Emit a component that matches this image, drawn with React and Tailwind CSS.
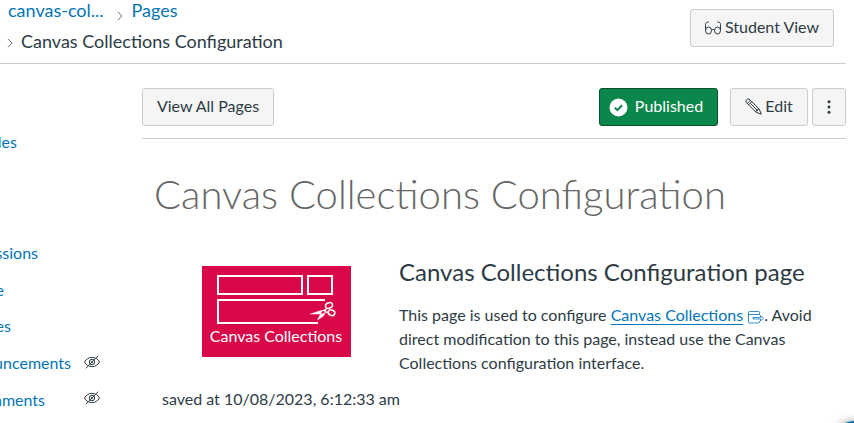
function Chevron({ className }) {
  return (
    <svg className={className} width="6" height="10" viewBox="0 0 6 10" fill="none" stroke="#6b7780" strokeWidth="1">
      <path d="M.8.8 5 5 .8 9.2" />
    </svg>
  );
}

function HiddenEye({ className }) {
  return (
    <svg className={className} width="16" height="14" viewBox="0 0 16 14" fill="none" stroke="#2d3b45" strokeWidth="1">
      <path d="M.5 7C2.2 3.9 4.8 2.4 8 2.4S13.800 3.900 15.500 7C13.800 10.100 11.200 11.600 8 11.600S2.200 10.100.5 7Z" />
      <circle cx="8" cy="7" r="2.700" />
      <circle cx="8" cy="7" r=".8" />
      <path d="M1.800 13.300 14.200.7" />
    </svg>
  );
}

function Glasses() {
  return (
    <svg className="mt-px" width="16" height="14" viewBox="0 0 16 14" fill="none" stroke="#2d3b45" strokeWidth="1">
      <ellipse cx="3.500" cy="9.500" rx="3" ry="3.500" />
      <ellipse cx="12.500" cy="9.500" rx="3" ry="3.500" />
      <path d="M.5 9.500V3.500C.5 1.600 1.500 1 3.800 1M15.500 9.500V3.500C15.500 1.600 14.500 1 12.200 1M6.500 9.500C7 8 9 8 9.500 9.500" />
    </svg>
  );
}

function Pencil() {
  return (
    <svg width="17" height="17" viewBox="0 0 17 17" fill="none" stroke="#2d3b45" strokeWidth="1" strokeLinejoin="round">
      <path d="M1 4.200C.3 2.500 2.300.4 4 1.100L14.200 11 16.300 16.200 11 14.200 1 4.200ZM2.300 5.400 5.300 2.300M3.700 6.800 6.700 3.700M5.300 5.300 12.500 12.500M11 14.200 11.300 12.500H12.500L12.700 11.200 14.200 11M14.600 15.600 15.700 14.600" />
    </svg>
  );
}

function ExternalLink() {
  return (
    <svg className="ml-[5px] inline-block align-[-3px]" width="16" height="13" viewBox="0 0 16 13" fill="none" stroke="#0374b5" strokeWidth=".8">
      <path d="M11.500 4V1.500Q11.500.5 10.500.5H1.500Q.5.500.5 1.500V11Q.5 12 1.500 12H10.500Q11.500 12 11.500 11V10M.5 3.500H11.500M5 6.500H12.500V4.500L15.500 7.200 12.500 10V8H5Z" />
    </svg>
  );
}

function Logo() {
  return (
    <div className="flex h-[91px] w-[149px] flex-col items-center bg-[#d90849] pr-px">
      <svg className="mt-[8px] shrink-0" width="121" height="52" viewBox="0 0 121 52" fill="none" stroke="#fff" strokeWidth="2">
        <path d="M2 2H86V20H2ZM92 2H116V20H92ZM109 26H2V49H102" />
        <g strokeWidth="1.500">
          <ellipse cx="113" cy="31.500" rx="3.600" ry="2.700" transform="rotate(-20 113 31.500)" />
          <ellipse cx="115.500" cy="38.700" rx="3.400" ry="2.700" transform="rotate(25 115.500 38.700)" />
          <path d="M111 34 107.500 42 101.500 46 106 37ZM112.500 38 105 36.500 94.500 40 105.500 40Z" fill="#fff" strokeWidth=".5" />
        </g>
      </svg>
      <div className="whitespace-nowrap text-[16px] leading-[20px] text-white">Canvas Collections</div>
    </div>
  );
}

const navItems = [
  { label: "les", width: "w-[17px]", gap: "mb-[87px]" },
  { label: "ssions", width: "w-[38px]" },
  { label: "e", width: "w-[4px]" },
  { label: "es", width: "w-[11px]" },
  { label: "uncements", width: "w-[71px]", hidden: true },
  { label: "nments", width: "w-[45px]", hidden: true },
];

const button = "flex h-[38px] items-center justify-center rounded-[3px] border border-[#c7cdd1] bg-[#f5f5f5] pb-[2px] text-[#2d3b45]";

export default function App() {
  return (
    <div className="relative h-[423px] w-[854px] overflow-hidden bg-white font-['Lato','Carlito',sans-serif] text-[16px] text-[#2d3b45]">
      <header className="mr-2 flex h-[64px] justify-between border-b border-[#c7cdd1]">
        <nav className="-mt-[2px] text-[18px] leading-[24px]">
          <div className="flex pl-[8px] text-[#0374b5]">
            <a>canvas-col...</a>
            <Chevron className="mt-[13px] mr-[9px] ml-[13px]" />
            <a>Pages</a>
          </div>
          <div className="mt-[7px] flex items-center pl-[7px]">
            <Chevron className="mt-[3px] mr-[8px]" />
            <span>Canvas Collections Configuration</span>
          </div>
        </nav>
        <button className={`${button} mt-[9px] mr-[12px] w-[144px] gap-1`}>
          <Glasses />
          Student View
        </button>
      </header>
      <div className="flex">
        <aside className="w-[142px] shrink-0 pt-[66px] text-[#0374b5]">
          {navItems.map((item) => (
            <div key={item.label} className={`flex h-[24px] items-center ${item.gap || "mb-[12.700px]"}`}>
              <div className={`flex justify-end overflow-hidden leading-[24px] ${item.width}`}>
                <span>{item.label}</span>
              </div>
              {item.hidden && <HiddenEye className="mr-[42px] mb-[3px] ml-auto" />}
            </div>
          ))}
        </aside>
        <main className="w-[704px]">
          <div className="flex h-[75px] border-b border-[#c7cdd1] pt-[24px]">
            <button className={`${button} w-[132px]`}>View All Pages</button>
            <button className="ml-auto flex h-[38px] w-[119px] items-center justify-center gap-[7px] rounded-[3px] border border-[#09502f] bg-[#0b874b] pr-[5px] pb-[2px] text-white">
              <svg className="mt-[3px]" width="19" height="19" viewBox="0 0 19 19">
                <circle cx="9.500" cy="9.500" r="9" fill="#fff" />
                <path d="m5.800 9.700 2.600 2.500 4.700-5" fill="none" stroke="#0b874b" strokeWidth="2" />
              </svg>
              Published
            </button>
            <button className={`${button} ml-[12px] w-[78px] gap-[3px]`}>
              <Pencil />
              Edit
            </button>
            <button className={`${button} ml-[4px] w-[34px]`}>
              <svg className="mt-[2px]" width="4" height="14" viewBox="0 0 4 14" fill="#2d3b45">
                <circle cx="2" cy="1.700" r="1.500" />
                <circle cx="2" cy="7" r="1.500" />
                <circle cx="2" cy="12.300" r="1.500" />
              </svg>
            </button>
          </div>
          <h1 className="mt-[28px] ml-[12px] h-[54px] text-[40px] leading-[54px] font-light whitespace-nowrap text-[#666]">
            Canvas Collections Configuration
          </h1>
          <div className="mt-[45px] ml-[60px] flex">
            <Logo />
            <section className="ml-[48px] w-[430px]">
              <h2 className="mt-[-10px] text-[24px] leading-[32px] whitespace-nowrap">Canvas Collections Configuration page</h2>
              <p className="mt-[15px] leading-[24px]">
                This page is used to configure{" "}
                <a className="text-[#0374b5] underline underline-offset-[3px]">Canvas Collections</a>
                <ExternalLink />. Avoid<br />
                direct modification to this page, instead use the Canvas<br />
                Collections configuration interface.
              </p>
            </section>
          </div>
          <p className="mt-[12px] ml-[20px] leading-[24px]">saved at 10/08/2023, 6:12:33 am</p>
        </main>
      </div>
      <div className="absolute top-[421px] left-[834px] h-[40px] w-[40px] rounded-full bg-[#0374b5] shadow-[0_0_8px_rgba(0,0,0,0.4)]" />
    </div>
  );
}
